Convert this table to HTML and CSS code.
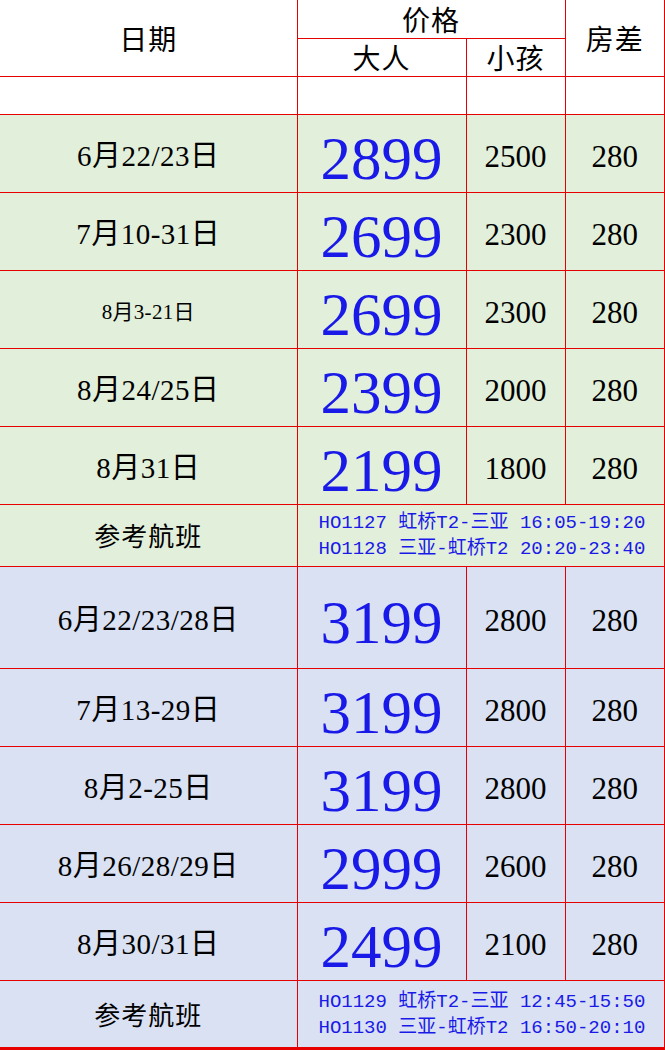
FILE: index.html
```html
<!DOCTYPE html>
<html lang="zh">
<head>
<meta charset="utf-8">
<link rel="stylesheet" href="styles.css">
</head>
<body>
<table class="price">
  <colgroup>
    <col class="c-date"><col class="c-adult"><col class="c-child"><col class="c-room">
  </colgroup>
  <tr class="h-half">
    <td rowspan="2" class="head">日期</td>
    <td colspan="2" class="head">价格</td>
    <td rowspan="2" class="head end">房差</td>
  </tr>
  <tr class="h-half">
    <td class="head">大人</td>
    <td class="head">小孩</td>
  </tr>
  <tr class="h-half"><td></td><td></td><td></td><td class="end"></td></tr>

  <tr class="row green"><td class="date">6月22/23日</td><td class="big">2899</td><td class="num">2500</td><td class="num end">280</td></tr>
  <tr class="row green"><td class="date">7月10-31日</td><td class="big">2699</td><td class="num">2300</td><td class="num end">280</td></tr>
  <tr class="row green"><td class="date small">8月3-21日</td><td class="big">2699</td><td class="num">2300</td><td class="num end">280</td></tr>
  <tr class="row green"><td class="date">8月24/25日</td><td class="big">2399</td><td class="num">2000</td><td class="num end">280</td></tr>
  <tr class="row green"><td class="date">8月31日</td><td class="big">2199</td><td class="num">1800</td><td class="num end">280</td></tr>
  <tr class="flight-row green f1">
    <td class="ref">参考航班</td>
    <td colspan="3" class="flights end">
      <div class="fl">HO1127 虹桥T2-三亚 16:05-19:20</div>
      <div class="fl">HO1128 三亚-虹桥T2 20:20-23:40</div>
    </td>
  </tr>

  <tr class="row blue tall"><td class="date">6月22/23/28日</td><td class="big">3199</td><td class="num">2800</td><td class="num end">280</td></tr>
  <tr class="row blue"><td class="date">7月13-29日</td><td class="big">3199</td><td class="num">2800</td><td class="num end">280</td></tr>
  <tr class="row blue"><td class="date">8月2-25日</td><td class="big">3199</td><td class="num">2800</td><td class="num end">280</td></tr>
  <tr class="row blue"><td class="date">8月26/28/29日</td><td class="big">2999</td><td class="num">2600</td><td class="num end">280</td></tr>
  <tr class="row blue"><td class="date">8月30/31日</td><td class="big">2499</td><td class="num">2100</td><td class="num end">280</td></tr>
  <tr class="flight-row blue f2 last">
    <td class="ref">参考航班</td>
    <td colspan="3" class="flights end">
      <div class="fl">HO1129 虹桥T2-三亚 12:45-15:50</div>
      <div class="fl">HO1130 三亚-虹桥T2 16:50-20:10</div>
    </td>
  </tr>
</table>
</body>
</html>
```

FILE: styles.css
```css
html, body {
  margin: 0;
  padding: 0;
  background: #ffffff;
}

.price {
  border-collapse: collapse;
  table-layout: fixed;
  width: 665px;
  font-family: "Liberation Serif", "Noto Sans CJK SC", serif;
  color: #000;
}

.c-date { width: 297px; }
.c-adult { width: 169px; }
.c-child { width: 99px; }
.c-room { width: 100px; }

.price td {
  border: 1px solid #e60000;
  padding: 0;
  text-align: center;
  vertical-align: middle;
  line-height: 1;
  overflow: hidden;
}

.price tr > td:first-child { border-left: none; }
.price tr:first-child > td { border-top: none; }
.price td.end { border-right: 2px solid #e60000; }
.price tr.last > td { border-bottom: 3px solid #e60000; }

.h-half { height: 38px; }
.row { height: 78px; }
.row.tall { height: 102px; }
.f1 { height: 62px; }
.f2 { height: 68px; }

.green td { background: #e2efda; }
.blue td { background: #d9e1f2; }

.head {
  font-family: "Noto Sans CJK SC", sans-serif;
  font-size: 28px;
  font-weight: 400;
  letter-spacing: 1px;
}

.price .row td { padding-top: 7px; }

.date {
  font-size: 29px;
  letter-spacing: 0.5px;
}
.date.small {
  font-size: 21px;
  letter-spacing: 0.3px;
}

.price .row td.big {
  font-size: 61px;
  color: #1a1ae8;
  padding-top: 10px;
}

.num {
  font-size: 31px;
}

.ref {
  font-family: "Noto Sans CJK SC", sans-serif;
  font-size: 26px;
  letter-spacing: 1px;
}

.price td.flights {
  text-align: left;
  padding-left: 21px;
  padding-top: 2px;
}

.fl {
  font-family: "Liberation Mono", "Noto Sans CJK SC", monospace;
  font-size: 19px;
  line-height: 26px;
  color: #1a1ae8;
  white-space: nowrap;
}
```
